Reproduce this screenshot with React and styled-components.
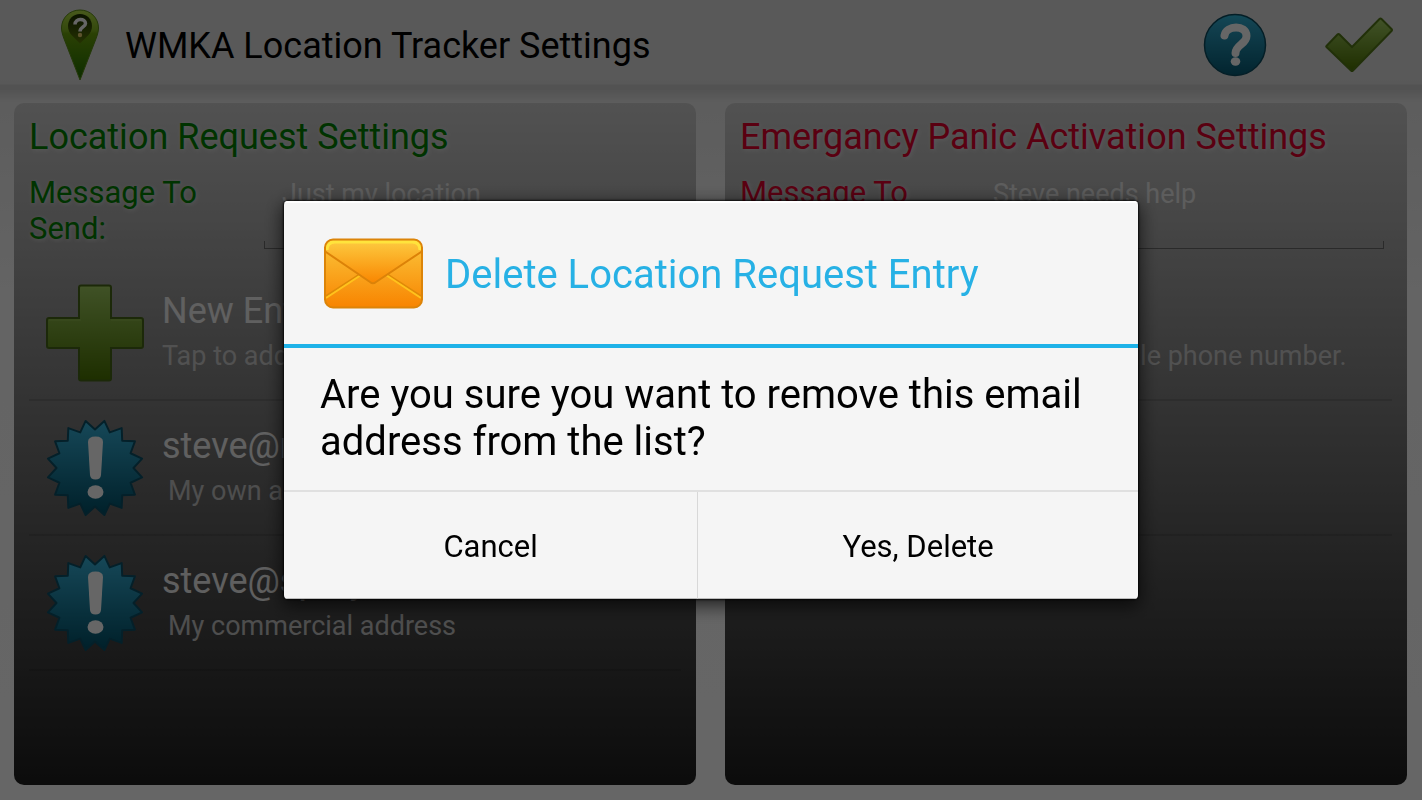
import { useState } from "react"
import styled, { createGlobalStyle } from "styled-components"

const GlobalStyle = createGlobalStyle`
  * {
    box-sizing: border-box;
  }
  body {
    margin: 0;
    font-family: Roboto, "Liberation Sans", sans-serif;
    background: #fff;
  }
  h1, h2, p, ul {
    margin: 0;
    padding: 0;
  }
  button, input {
    font-family: inherit;
  }
`

const Page = styled.div`
  display: flex;
  flex-direction: column;
  min-height: 100vh;
  background: linear-gradient(#d0d0d0 90px, #e8e8e8 102px, #fafafa 300px, #ffffff);
`

const Header = styled.header`
  display: flex;
  align-items: center;
  height: 90px;
  padding: 0 29px 0 60px;
  background: linear-gradient(#dedede, #dedede 80px, #dcdcdc 84px, #cecece 85px, #cccccc);
`

const HeaderTitle = styled.h1`
  flex: 1;
  padding: 2px 0 0 25px;
  color: #000;
  font-size: 36px;
  line-height: 42px;
  font-weight: 400;
`

const HeaderActions = styled.div`
  display: flex;
  align-items: center;
  gap: 58px;
`

const IconButton = styled.button`
  display: flex;
  padding: 0;
  border: 0;
  background: none;
`

const Columns = styled.main`
  flex: 1;
  display: grid;
  grid-template-columns: 1fr 1fr;
  gap: 29px;
  padding: 13px 15px 15px 14px;
`

const Panel = styled.section`
  padding: 13px 15px;
  border-radius: 10px;
  background: linear-gradient(#cccccc, #1e1e1e);
`

const PanelTitle = styled.h2`
  color: ${({ $color }) => $color};
  font-size: 36px;
  line-height: 42px;
  font-weight: 400;
  text-shadow: 1px 1px 4px #ffffff88;
`

const Field = styled.div`
  display: grid;
  grid-template-columns: 235px 1fr;
  padding: 17px 8px 17px 0;
`

const FieldLabel = styled.label`
  max-width: 200px;
  color: ${({ $color }) => $color};
  font-size: 31px;
  line-height: 36px;
  text-shadow: 1px 1px 4px #ffffff88;
`

const FieldInput = styled.input`
  width: 100%;
  height: 74px;
  padding: 0 18px 36px;
  border: 0;
  outline: 0;
  color: #fff;
  opacity: 0.7;
  font-size: 27px;
  line-height: 32px;
  background:
    linear-gradient(#505050, #505050) left bottom / 100% 1px no-repeat,
    linear-gradient(#505050, #505050) left bottom / 1px 8px no-repeat,
    linear-gradient(#505050, #505050) right bottom / 1px 8px no-repeat;
`

const EntryList = styled.ul`
  list-style: none;
`

const Entry = styled.li`
  border-bottom: 2px solid #0000001c;
`

const EntryButton = styled.button`
  display: flex;
  align-items: center;
  gap: 18px;
  width: 100%;
  height: 133px;
  padding: 0 17px;
  border: 0;
  background: none;
  text-align: left;
`

const EntryText = styled.span`
  display: flex;
  flex-direction: column;
  gap: 8px;
  padding-bottom: 4px;
  white-space: nowrap;
`

const EntryTitle = styled.span`
  color: #fff;
  opacity: ${({ $muted }) => ($muted ? 0.85 : 0.9)};
  font-size: 36px;
  line-height: 42px;
`

const EntryNote = styled.span`
  padding-left: ${({ $muted }) => ($muted ? 0 : 6)}px;
  color: ${({ $muted }) => ($muted ? "#cacaca" : "#c2c2c2")};
  font-size: 27px;
  line-height: 32px;
`

const Overlay = styled.div`
  position: fixed;
  inset: 0;
  display: flex;
  align-items: center;
  justify-content: center;
  background: rgba(0, 0, 0, 0.6);
`

const Dialog = styled.div`
  width: min(854px, 92vw);
  border-radius: 4px;
  overflow: hidden;
  background: #f5f5f5;
  box-shadow: 0 0 2px 1px #000000cc, 0 5px 18px 2px #000000aa;
`

const DialogHeader = styled.div`
  display: flex;
  align-items: center;
  gap: 21px;
  height: 147px;
  padding: 0 40px;
  border-top: 2px solid #fff;
  border-bottom: 4px solid #1eb2e8;
`

const DialogTitle = styled.h2`
  padding-top: 2px;
  color: #27b1e5;
  font-size: 40px;
  line-height: 47px;
  font-weight: 400;
`

const DialogMessage = styled.p`
  padding: 23px 36px 25px;
  color: #000;
  font-size: 40px;
  line-height: 47px;
`

const DialogActions = styled.div`
  display: grid;
  grid-template-columns: 15fr 16fr;
  border-top: 2px solid #e0e0e0;
`

const DialogButton = styled.button`
  height: 107px;
  padding: 4px 0 0;
  border: 0;
  border-bottom: 1px solid #bbb;
  background: none;
  color: #000;
  font-size: 31px;
  line-height: 36px;

  & + & {
    border-left: 1px solid #d8d8d8;
  }
`

const burst = Array.from({ length: 32 }, (_, i) => {
  const angle = (i * Math.PI) / 16
  const r = i % 2 ? 48 : 38.5
  return `${49 + r * Math.sin(angle)},${49 - r * Math.cos(angle)}`
}).join(" ")

function PinIcon() {
  return (
    <svg width="40" height="72" viewBox="0 0 40 72" aria-hidden="true">
      <defs>
        <linearGradient id="pin" x1="0" y1="0" x2="0" y2="1">
          <stop offset="0" stopColor="#b4e048" />
          <stop offset="0.28" stopColor="#86b824" />
          <stop offset="0.34" stopColor="#6ba20c" />
          <stop offset="1" stopColor="#207000" />
        </linearGradient>
        <linearGradient id="pinHole" x1="0" y1="0" x2="0" y2="1">
          <stop offset="0" stopColor="#1c3000" />
          <stop offset="1" stopColor="#5c7c08" />
        </linearGradient>
      </defs>
      <path
        d="M20 1C9.500 1 1.500 9 1.500 19C1.500 23 3 27 4.500 31L20 71L35.500 31C37 27 38.500 23 38.500 19C38.500 9 30.500 1 20 1Z"
        fill="url(#pin)"
        stroke="#5c8e18"
      />
      <path
        d="M20 5C13 5 8 10.500 8 17C8 21 9.500 24 12 26.500L20 34.500L28 26.500C30.500 24 32 21 32 17C32 10.500 27 5 20 5Z"
        fill="url(#pinHole)"
      />
      <path
        d="M15 15.500C15 9 25.500 9 25.500 14.500C25.500 18 20 18 20 22.500"
        fill="none"
        stroke="#fff"
        strokeWidth="3.500"
      />
      <circle cx="20" cy="26" r="2.200" fill="#e8d070" />
    </svg>
  )
}

function HelpIcon() {
  return (
    <svg width="64" height="64" viewBox="0 0 64 64" aria-hidden="true">
      <defs>
        <linearGradient id="help" x1="0" y1="0" x2="0" y2="1">
          <stop offset="0" stopColor="#2cbadc" />
          <stop offset="0.12" stopColor="#2fa6ca" />
          <stop offset="1" stopColor="#065a74" />
        </linearGradient>
      </defs>
      <circle cx="32" cy="32" r="30.500" fill="url(#help)" stroke="#0c4c60" strokeWidth="1.500" />
      <path
        d="M21.500 22.500C23 12 43.500 11.500 43.500 23C43.500 31 32.500 32 32.500 40"
        fill="none"
        stroke="#fff"
        strokeWidth="8"
        strokeLinecap="round"
      />
      <ellipse cx="32.500" cy="48.500" rx="4.800" ry="4.200" fill="#fff" />
    </svg>
  )
}

function CheckIcon() {
  return (
    <svg width="68" height="56" viewBox="0 0 68 56" aria-hidden="true">
      <defs>
        <linearGradient id="check" x1="0" y1="0" x2="0" y2="1">
          <stop offset="0" stopColor="#a4ce64" />
          <stop offset="1" stopColor="#4c7400" />
        </linearGradient>
      </defs>
      <path
        d="M1.500 29L12.500 17.500Q13.500 16.500 14.500 17.500L27 30L54.500 2Q55.500 1 56.500 2L66.500 12Q67.500 13 66.500 14L28 53.500Q27 54.500 26 53.500L1.500 30Q1 29.500 1.500 29Z"
        fill="url(#check)"
        stroke="#547818"
        strokeWidth="2"
      />
    </svg>
  )
}

function PlusIcon() {
  return (
    <svg width="98" height="98" viewBox="0 0 98 98" aria-hidden="true">
      <defs>
        <linearGradient id="plus" x1="0" y1="0" x2="0" y2="1">
          <stop offset="0" stopColor="#a0cc60" />
          <stop offset="1" stopColor="#4a7400" />
        </linearGradient>
      </defs>
      <path
        d="M35 1.500H63Q65 1.500 65 3.500V34H95Q97 34 97 36V62Q97 64 95 64H65V94.500Q65 96.500 63 96.500H35Q33 96.500 33 94.500V64H3Q1 64 1 62V36Q1 34 3 34H33V3.500Q33 1.500 35 1.500Z"
        fill="url(#plus)"
        stroke="#486818"
        strokeWidth="2"
      />
      <path d="M35 3.500H63M3 36H35M65 36H95" stroke="#a8d064" strokeOpacity="0.5" />
    </svg>
  )
}

function AlertIcon() {
  return (
    <svg width="98" height="98" viewBox="0 0 98 98" aria-hidden="true">
      <defs>
        <linearGradient id="alert" x1="0" y1="0" x2="0" y2="1">
          <stop offset="0" stopColor="#38b4dc" />
          <stop offset="1" stopColor="#005068" />
        </linearGradient>
      </defs>
      <polygon
        points={burst}
        fill="url(#alert)"
        stroke="#0c5068"
        strokeWidth="2"
        strokeLinejoin="round"
      />
      <path
        d="M42 23Q42 17.500 49.500 17.500Q57 17.500 57 23L55 56Q54.500 60.500 49.500 60.500Q44.500 60.500 44 56Z"
        fill="#fff"
      />
      <ellipse cx="49.500" cy="73" rx="8" ry="6.800" fill="#fff" />
    </svg>
  )
}

function MailIcon() {
  return (
    <svg width="100" height="71" viewBox="0 0 100 71" aria-hidden="true">
      <defs>
        <linearGradient id="mail" x1="0" y1="0" x2="0" y2="1">
          <stop offset="0" stopColor="#fbc63c" />
          <stop offset="1" stopColor="#f88400" />
        </linearGradient>
        <linearGradient id="flap" x1="0" y1="0" x2="0" y2="1">
          <stop offset="0" stopColor="#fdcf44" />
          <stop offset="1" stopColor="#f98600" />
        </linearGradient>
        <clipPath id="mailShape">
          <rect x="1" y="1.500" width="97" height="68" rx="8" />
        </clipPath>
      </defs>
      <rect x="1" y="1.500" width="97" height="68" rx="8" fill="url(#mail)" />
      <g clipPath="url(#mailShape)" fill="none">
        <path d="M2 58L36 36M97 58L63 36" stroke="#df8a08" strokeWidth="2" />
        <path d="M2 60L37 37M97 60L62 37" stroke="#ffc21c" strokeWidth="2" />
        <path d="M-1 12L46 44Q49 46.500 52 44L100 12V0H-1Z" fill="url(#flap)" />
        <path d="M-1 12L46 44Q49 46.500 52 44L100 12" stroke="#dc8208" strokeWidth="2" />
        <path d="M3 12Q3 4 11 4H88Q96 4 96 12" stroke="#ffe43c" strokeWidth="3" />
      </g>
      <rect x="1" y="1.500" width="97" height="68" rx="8" fill="none" stroke="#dc8408" strokeWidth="2" />
    </svg>
  )
}

const PANELS = [
  {
    id: "request",
    title: "Location Request Settings",
    color: "#008000",
    message: "Just my location",
    entries: [
      { title: "New Entry", note: "Tap to add new email", isNew: true },
      { title: "steve@mail.com", note: "My own address" },
      { title: "steve@spray.com", note: "My commercial address" },
    ],
  },
  {
    id: "panic",
    title: "Emergancy Panic Activation Settings",
    color: "#e0002c",
    message: "Steve needs help",
    entries: [
      { title: "New Entry", note: "Tap to enter new mobile phone number.", isNew: true },
      { title: "Steve", note: "My mobile" },
    ],
  },
]

function SettingsPanel({ panel }) {
  const [message, setMessage] = useState(panel.message)
  const inputId = `${panel.id}-message`

  return (
    <Panel>
      <PanelTitle $color={panel.color}>{panel.title}</PanelTitle>
      <Field>
        <FieldLabel htmlFor={inputId} $color={panel.color}>
          Message To Send:
        </FieldLabel>
        <FieldInput
          id={inputId}
          type="text"
          value={message}
          onChange={(e) => setMessage(e.target.value)}
        />
      </Field>
      <EntryList>
        {panel.entries.map((entry) => (
          <Entry key={entry.title}>
            <EntryButton type="button">
              {entry.isNew ? <PlusIcon /> : <AlertIcon />}
              <EntryText>
                <EntryTitle $muted={entry.isNew}>{entry.title}</EntryTitle>
                <EntryNote $muted={entry.isNew}>{entry.note}</EntryNote>
              </EntryText>
            </EntryButton>
          </Entry>
        ))}
      </EntryList>
    </Panel>
  )
}

function DeleteDialog({ onClose }) {
  return (
    <Overlay>
      <Dialog role="dialog" aria-modal="true" aria-labelledby="delete-title">
        <DialogHeader>
          <MailIcon />
          <DialogTitle id="delete-title">Delete Location Request Entry</DialogTitle>
        </DialogHeader>
        <DialogMessage>
          Are you sure you want to remove this email address from the list?
        </DialogMessage>
        <DialogActions>
          <DialogButton type="button" onClick={onClose}>
            Cancel
          </DialogButton>
          <DialogButton type="button" onClick={onClose}>
            Yes, Delete
          </DialogButton>
        </DialogActions>
      </Dialog>
    </Overlay>
  )
}

export default function App() {
  const [open, setOpen] = useState(true)

  return (
    <>
      <GlobalStyle />
      <Page>
        <Header>
          <PinIcon />
          <HeaderTitle>WMKA Location Tracker Settings</HeaderTitle>
          <HeaderActions>
            <IconButton type="button" aria-label="Help">
              <HelpIcon />
            </IconButton>
            <IconButton type="button" aria-label="Done">
              <CheckIcon />
            </IconButton>
          </HeaderActions>
        </Header>
        <Columns>
          {PANELS.map((panel) => (
            <SettingsPanel key={panel.id} panel={panel} />
          ))}
        </Columns>
      </Page>
      {open && <DeleteDialog onClose={() => setOpen(false)} />}
    </>
  )
}
